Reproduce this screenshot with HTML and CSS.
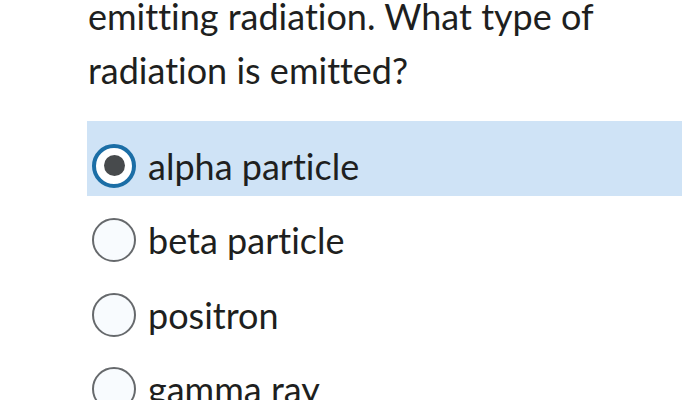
FILE: index.html
```html
<!DOCTYPE html>
<html>
<head>
<meta charset="utf-8">
<link rel="stylesheet" href="styles.css">
</head>
<body>
<div class="page">
  <p class="question">emitting radiation. What type of<br>radiation is emitted?</p>
  <div class="options">
    <label class="option selected"><span class="radio"><span class="dot"></span></span><span class="label">alpha particle</span></label>
    <label class="option"><span class="radio"></span><span class="label">beta particle</span></label>
    <label class="option"><span class="radio"></span><span class="label">positron</span></label>
    <label class="option"><span class="radio"></span><span class="label">gamma ray</span></label>
  </div>
</div>
</body>
</html>
```
FILE: styles.css
```css
html, body {
  margin: 0;
  padding: 0;
  background: #ffffff;
  overflow: hidden;
}
.page {
  padding-left: 87px;
  width: 595px;
  font-family: Lato, "Noto Sans", sans-serif;
  color: #1e1f20;
  font-variant-ligatures: none;
  font-feature-settings: "liga" 0, "clig" 0;
}
.question {
  margin: -11px 0 0 1px;
  font-size: 36px;
  line-height: 54px;
  height: 132px;
  box-sizing: border-box;
}
.options {
  display: flex;
  flex-direction: column;
}
.option {
  display: flex;
  align-items: center;
  gap: 12px;
  height: 74.5px;
  box-sizing: border-box;
  padding: 15px 0 0 5px;
  font-size: 36px;
}
.option.selected {
  background: #cfe3f6;
}
.radio {
  width: 44px;
  height: 44px;
  box-sizing: border-box;
  border-radius: 50%;
  border: 2px solid #66696c;
  background: #f8fbfe;
  display: flex;
  align-items: center;
  justify-content: center;
  flex: none;
}
.selected .radio {
  border: 4px solid #1b6ea6;
  background: #ffffff;
}
.dot {
  width: 21px;
  height: 21px;
  border-radius: 50%;
  background: #474a4c;
}
```
